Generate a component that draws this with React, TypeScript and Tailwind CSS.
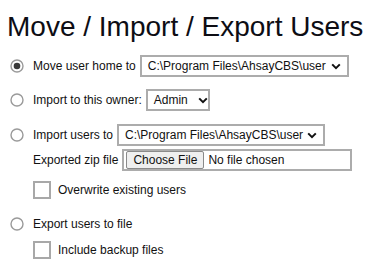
import type { ReactNode } from 'react';

const font = { fontFamily: '"Liberation Sans", Arial, sans-serif' };

function Radio({ checked = false }: { checked?: boolean }) {
  return (
    <svg width="14" height="14" viewBox="0 0 14 14" className="shrink-0">
      <circle cx="7" cy="7" r="6" fill="#fff" stroke="#9a9a9a" strokeWidth="1.4" />
      {checked && <circle cx="7" cy="7" r="3.3" fill="#3a3a3a" />}
    </svg>
  );
}

function Checkbox() {
  return <div className="h-[18px] w-[18px] shrink-0 border-2 border-[#a8a8a8] bg-white" />;
}

function Chevron() {
  return (
    <svg width="10" height="7" viewBox="0 0 10 7" className="shrink-0">
      <path d="M1.2 1.4 5 5.2 8.8 1.4" fill="none" stroke="#111" strokeWidth="2" />
    </svg>
  );
}

function Select({ value, width }: { value: string; width: string }) {
  return (
    <div
      className={`ml-1 flex h-[22px] items-center justify-between border-2 border-[#acacac] bg-white pl-[6px] pr-[6px] text-[12px] text-[#111] ${width}`}
    >
      <span className="whitespace-nowrap">{value}</span>
      <Chevron />
    </div>
  );
}

function Row({ children, className = '' }: { children: ReactNode; className?: string }) {
  return <div className={`flex items-center text-[12px] text-[#111] ${className}`}>{children}</div>;
}

export default function App() {
  return (
    <div className="h-[270px] w-[380px] bg-white pl-[7px]" style={font}>
      <h1 className="pt-[11px] text-[28px] leading-[32px] font-normal text-[#0d0d14]">
        Move / Import / Export Users
      </h1>

      <Row className="mt-[12px] h-[22px] pl-[3px]">
        <Radio checked />
        <span className="ml-[9px]">Move user home to</span>
        <Select value="C:\Program Files\AhsayCBS\user" width="w-[209px]" />
      </Row>

      <Row className="mt-[12px] h-[22px] pl-[3px]">
        <Radio />
        <span className="ml-[9px]">Import to this owner:</span>
        <Select value="Admin" width="w-[64px] gap-[10px]" />
      </Row>

      <Row className="mt-[13px] h-[22px] pl-[3px]">
        <Radio />
        <span className="ml-[9px]">Import users to</span>
        <Select value="C:\Program Files\AhsayCBS\user" width="w-[208px]" />
      </Row>

      <Row className="mt-[3px] h-[22px] pl-[26px]">
        <span>Exported zip file</span>
        <div className="ml-1 flex h-[22px] w-[230px] items-center border-2 border-[#acacac] bg-white pl-[2px]">
          <div className="flex h-[18px] w-[78px] items-center justify-center rounded-[2px] border border-[#8a8a8a] bg-[#efefef]">
            Choose File
          </div>
          <span className="ml-[4px]">No file chosen</span>
        </div>
      </Row>

      <Row className="mt-[10px] h-[18px] pl-[26px]">
        <Checkbox />
        <span className="ml-[7px]">Overwrite existing users</span>
      </Row>

      <Row className="mt-[14px] h-[22px] pl-[3px]">
        <Radio />
        <span className="ml-[9px]">Export users to file</span>
      </Row>

      <Row className="mt-[6px] h-[18px] pl-[26px]">
        <Checkbox />
        <span className="ml-[7px]">Include backup files</span>
      </Row>
    </div>
  );
}
